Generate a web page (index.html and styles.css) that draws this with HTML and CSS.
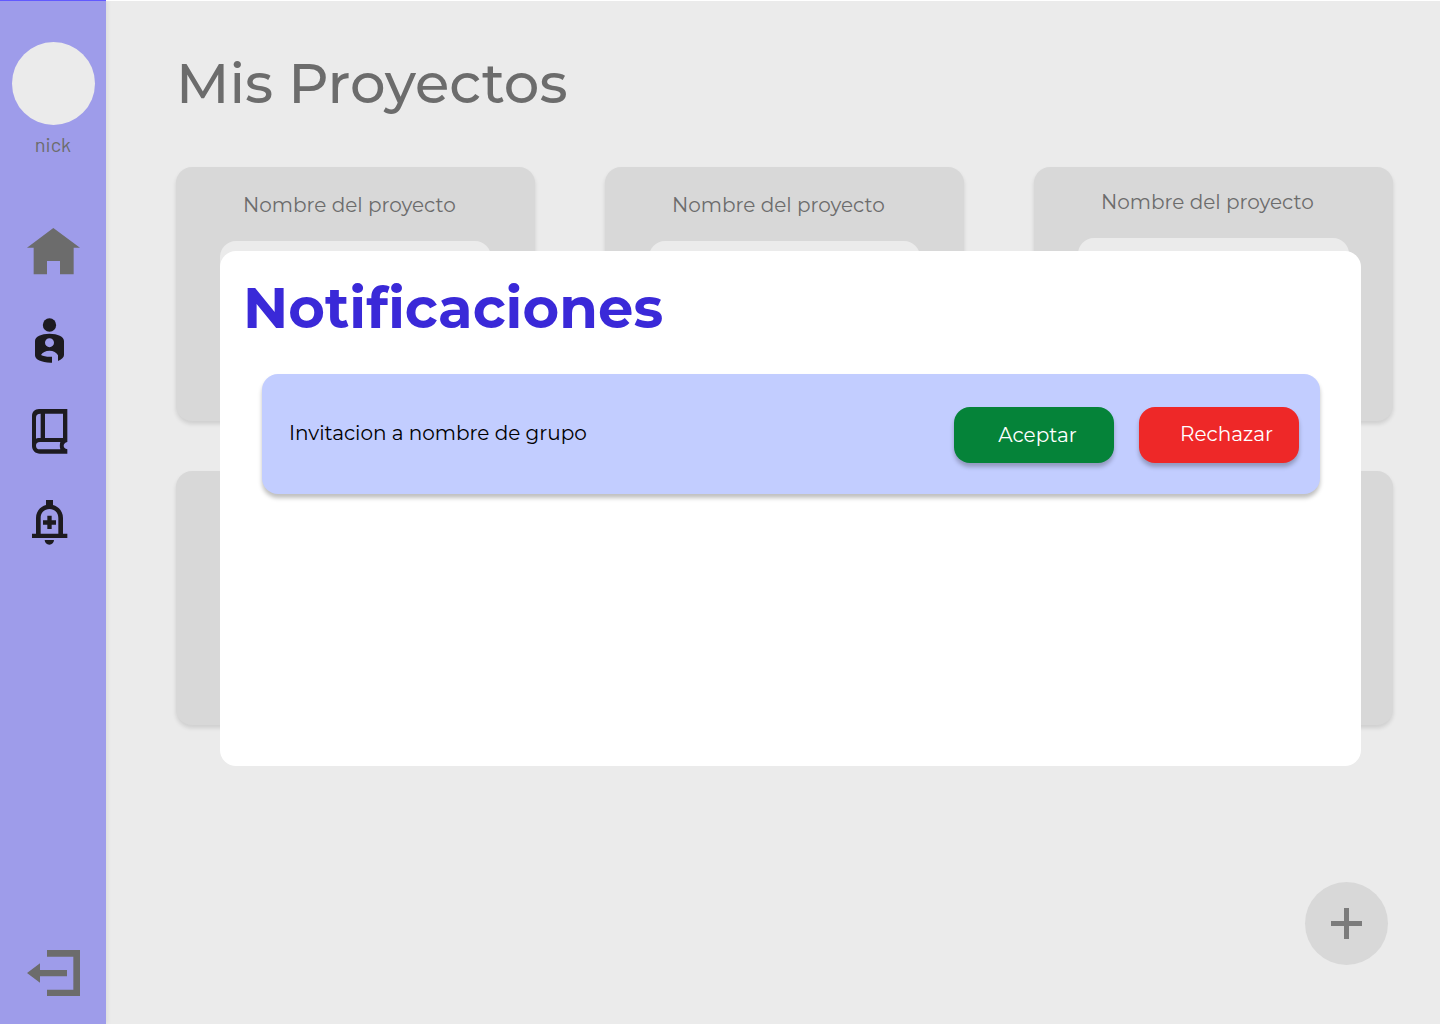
FILE: index.html
```html
<!DOCTYPE html>
<html lang="es">
<head>
<meta charset="utf-8">
<meta name="viewport" content="width=device-width, initial-scale=1">
<title>Mis Proyectos</title>
<link rel="stylesheet" href="styles.css">
</head>
<body>
<div class="app">
  <aside class="sidebar">
    <div class="avatar"></div>
    <p class="nick">nick</p>
    <nav class="nav">
      <a href="#" class="nav-link" aria-label="Inicio">
        <svg class="icon muted" viewBox="81 54 159 138"><path d="M160 54L240 113H221V193H180V153H141V193H101V113H81Z"/></svg>
      </a>
      <a href="#" class="nav-link" aria-label="Perfil">
        <svg class="icon" viewBox="81 324 159 138"><circle cx="148.500" cy="345" r="20"/><path fill-rule="evenodd" d="M105 393C105 380 124 371 148.500 371S192 380 192 393V435C192 442 185 449 174 453V436C170 427 160 422 148.500 422C137 422 127 427 123 435C131 439 143 441 156 440V458C126 459 105 449 105 436ZM148.500 384.500A13.500 13.500 0 1 0 148.500 411.500A13.500 13.500 0 1 0 148.500 384.500Z"/></svg>
      </a>
      <a href="#" class="nav-link" aria-label="Cursos">
        <svg class="icon" viewBox="81 54 159 138"><path fill-rule="evenodd" d="M117 57H202V156C195 158 191 162 191 167S195 176 202 178V191H120C106 191 96 181 96 168V79C96 66 104 57 117 57ZM122 71C112 71 108 75 108 83V146C112 144 116 144 122 144ZM135 71V144H189V71ZM120 156C112 156 108 160 108 167S112 178 120 178H181C179 171 179 163 181 156Z"/></svg>
      </a>
      <a href="#" class="nav-link" aria-label="Notificaciones">
        <svg class="icon" viewBox="81 324 159 138"><path fill-rule="evenodd" d="M138 330H159V345C177 350 189 365 189 384V431H202V444H96V431H108V384C108 365 120 350 138 345ZM122 431H175V384C175 368 164 357 148.500 357S122 368 122 384Z"/><path d="M142 377H155V391H168V404H155V417H142V404H129V391H142ZM134 450H162C162 458 156 464 148 464S134 458 134 450Z"/></svg>
      </a>
    </nav>
    <a href="#" class="nav-link logout" aria-label="Salir">
      <svg class="icon muted" viewBox="81 60 159 138"><path d="M141 60H240V198H141V179H220V80H141ZM81 129L120 100V120H201V139H120V158Z"/></svg>
    </a>
  </aside>

  <main class="main">
    <h1 class="title">Mis Proyectos</h1>
    <section class="projects">
      <article class="card"><h2 class="card-name">Nombre del proyecto</h2><div class="card-body"></div></article>
      <article class="card"><h2 class="card-name">Nombre del proyecto</h2><div class="card-body"></div></article>
      <article class="card raised"><h2 class="card-name">Nombre del proyecto</h2><div class="card-body"></div></article>
      <article class="card"></article>
      <article class="card"></article>
      <article class="card"></article>
    </section>
    <button class="add" type="button" aria-label="Nuevo proyecto">
      <svg class="plus" viewBox="0 0 31 31"><path d="M13 0H18V13H31V18H18V31H13V18H0V13H13Z"/></svg>
    </button>
  </main>
</div>

<section class="modal" role="dialog" aria-labelledby="modal-title">
  <h2 class="modal-title" id="modal-title">Notificaciones</h2>
  <div class="notice">
    <p class="notice-text">Invitacion a nombre de grupo</p>
    <button class="btn accept" type="button">Aceptar</button>
    <button class="btn reject" type="button">Rechazar</button>
  </div>
</section>
</body>
</html>
```
FILE: styles.css
```css
* {
  box-sizing: border-box;
}

body {
  margin: 0;
  background: #ebebeb;
  color: #6c6c6c;
  font-family: Montserrat, Inter, sans-serif;
  font-size: 20px;
}

h1, h2, p {
  margin: 0;
}

.app {
  display: flex;
  min-height: 100vh;
}

.sidebar {
  display: flex;
  flex-direction: column;
  flex: none;
  width: 106px;
  padding: 41px 0 28px;
  border-top: 1px solid #6259ff;
  background: #9e9cea;
  box-shadow: 2px 0 4px rgba(0, 0, 0, 0.06);
}

.avatar {
  width: 83px;
  height: 83px;
  margin-left: 12px;
  border-radius: 50%;
  background: #ebebeb;
}

.nick {
  margin-top: 7px;
  font-family: Barlow, Roboto, sans-serif;
  font-size: 20px;
  line-height: 24px;
  text-align: center;
}

.nav {
  display: flex;
  flex-direction: column;
  gap: 44px;
  margin-top: 72px;
}

.nav-link {
  display: flex;
  padding-left: 27px;
}

.logout {
  margin-top: auto;
}

.icon {
  width: 53px;
  height: 46px;
  overflow: visible;
  fill: #1d1b20;
}

.muted {
  fill: #6c6c6c;
}

.main {
  display: flex;
  flex-direction: column;
  flex: 1;
  padding: 46px 47px 59px 70px;
  border-top: 1px solid #fff;
}

.title {
  font-size: 56px;
  font-weight: 500;
  line-height: 72px;
}

.projects {
  display: grid;
  grid-template-columns: repeat(3, 1fr);
  gap: 50px 70px;
  margin-top: 48px;
}

.card {
  height: 254px;
  padding: 26px 44px 0;
  border-radius: 16px;
  background: #d8d8d8;
  box-shadow: 0 3px 4px rgba(0, 0, 0, 0.12);
}

.raised {
  padding-top: 23px;
}

.card-name {
  padding-left: 23px;
  font-size: 20px;
  font-weight: 400;
  line-height: 24px;
  white-space: nowrap;
}

.card-body {
  height: 150px;
  margin-top: 24px;
  border-radius: 16px;
  background: #ebebeb;
}

.add {
  display: flex;
  align-items: center;
  justify-content: center;
  align-self: flex-end;
  width: 83px;
  height: 83px;
  margin-top: auto;
  margin-right: 5px;
  padding: 0;
  border: 0;
  border-radius: 50%;
  background: #d8d8d8;
}

.plus {
  width: 31px;
  height: 31px;
  fill: #7c7c7c;
}

.modal {
  position: absolute;
  top: 251px;
  right: 79px;
  left: 220px;
  min-height: 515px;
  padding: 21px 41px 40px 42px;
  border-radius: 16px;
  background: #fff;
}

.modal-title {
  margin-left: -19px;
  color: #3a29d8;
  font-size: 56px;
  font-weight: 700;
  line-height: 72px;
}

.notice {
  display: flex;
  align-items: center;
  gap: 25px;
  min-height: 120px;
  margin-top: 30px;
  padding: 2px 21px 0 27px;
  border-radius: 16px;
  background: #c2cdff;
  box-shadow: 0 4px 4px rgba(0, 0, 0, 0.25);
}

.notice-text {
  flex: 1;
  padding-bottom: 4px;
  color: #000;
  line-height: 24px;
}

.btn {
  width: 160px;
  height: 56px;
  padding: 0 0 0 7px;
  border: 0;
  border-radius: 16px;
  color: #fff;
  font-family: inherit;
  font-size: 20px;
  font-weight: 400;
  box-shadow: 0 4px 4px rgba(0, 0, 0, 0.25);
}

.accept {
  background: #058339;
}

.reject {
  padding: 0 0 2px 15px;
  background: #ee2828;
}
```
